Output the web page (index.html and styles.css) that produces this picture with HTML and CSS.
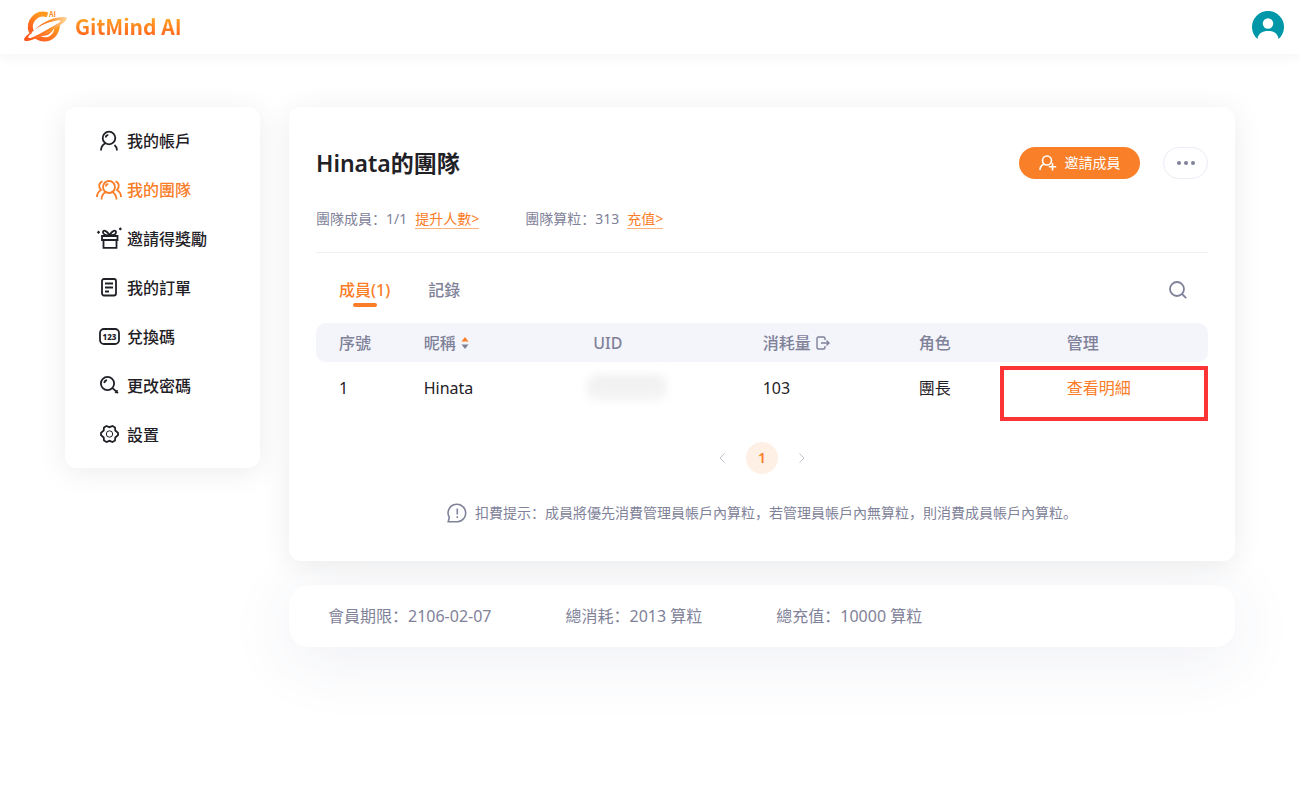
FILE: index.html
```html
<!DOCTYPE html>
<html lang="zh-CN">
<head>
<meta charset="utf-8">
<meta name="viewport" content="width=device-width, initial-scale=1">
<title>GitMind AI</title>
<link rel="stylesheet" href="styles.css">
</head>
<body>
<header class="topbar">
  <a class="brand" href="#">
    <svg class="brand-mark" viewBox="0 0 46 34" aria-hidden="true">
      <defs>
        <linearGradient id="g1" x1="0" y1="1" x2="0.6" y2="0">
          <stop offset="0" stop-color="#ff5a1f"/><stop offset="1" stop-color="#ff9a1f"/>
        </linearGradient>
        <linearGradient id="g2" x1="0" y1="0" x2="1" y2="0">
          <stop offset="0" stop-color="#ff4e1a"/><stop offset="0.6" stop-color="#ff8a24"/><stop offset="1" stop-color="#ffd9a0"/>
        </linearGradient>
      </defs>
      <path d="M24.500 4.800A12.800 12.800 0 0 0 8.500 22" fill="none" stroke="url(#g1)" stroke-width="5"/>
      <path d="M12 28.500C22 35.500 36.500 30 37 14.500L31.500 17.500C30.500 26 23.500 29.500 17.500 26Z" fill="url(#g1)"/>
      <path d="M8.500 21.500C3 25.500 0 29 1.500 30.600C3.500 32.600 14 28.500 24 23C36 16.500 45 10.500 43.800 8C42.500 6 34 7 27 9.700C20 12.500 15 16 11.500 20C19 14.500 27 11.500 34 10.500C38 10 38.500 11 36 12.800C31 16 26 18.500 19 22.500C12 26.500 6.500 28.800 5.500 27.800C4.800 27 6 25 9 23Z" fill="url(#g2)"/>
      <path d="M18 25.500C23 24 28 21 30.500 17.500C30 22 25 27 18 25.500Z" fill="url(#g1)"/>
      <text class="mark-text" x="26" y="7">AI</text>
    </svg>
    <span class="brand-name">GitMind AI</span>
  </a>
  <button class="avatar" aria-label="帳戶">
    <svg viewBox="0 0 32 32" aria-hidden="true">
      <path d="M5.500 28A16 16 0 1 1 26.500 28C26 22.500 21.500 20 16 20S6 22.500 5.500 28Z" fill="#0097a9"/>
      <circle cx="16" cy="12.500" r="5.200" fill="#fff"/>
    </svg>
  </button>
</header>

<div class="layout">
  <nav class="sidebar">
    <a class="nav-item" href="#">
      <svg class="nav-icon" viewBox="0 0 26 22"><circle cx="13" cy="8" r="6.300"/><path d="M5 20.500C5 16.800 6.800 14.600 9.300 13.200M18.500 15C20.200 16.400 21 18 21 20.500M9.700 7.500C9.900 6 11 5 12.300 4.800"/></svg>
      我的帳戶</a>
    <a class="nav-item active" href="#">
      <svg class="nav-icon" viewBox="0 0 26 22"><circle cx="13" cy="8" r="6"/><path d="M5.500 20.500C5.500 17 7 14.600 9.500 12.900M20.500 20.500C20.500 17 19 14.600 16.500 12.900M6.500 2.300C2.500 3.500 2.300 8.500 5 11C2.300 12.500 1 14.800 1 18M19.500 2.300C23.500 3.500 23.700 8.500 21 11C23.700 12.500 25 14.800 25 18M9.800 7.500C10 6 11 5 12.300 4.800"/></svg>
      我的團隊</a>
    <a class="nav-item" href="#">
      <svg class="nav-icon" viewBox="0 0 26 22"><path d="M6 8H21.500V12H6ZM7.500 12V19.800H20.500V12M13.500 7.500C11 2 6.500 1.500 7 4.500C7.200 6 10 7.300 13.500 7.500C17 7.300 20 6 20 4.500C20.500 1.500 16 2 13.500 7.500"/><path class="solid" d="M2.500 2.500L4.200 4.200L2.500 5.900L.8 4.200ZM24.300 -.8L26 .9L24.300 2.600L22.600 .9Z"/></svg>
      邀請得獎勵</a>
    <a class="nav-item" href="#">
      <svg class="nav-icon" viewBox="0 0 26 22"><rect x="6" y="2" width="14" height="16.500" rx="2"/><path d="M9 6.500H17M9 10.500H17M9 14.500H13"/></svg>
      我的訂單</a>
    <a class="nav-item" href="#">
      <svg class="nav-icon" viewBox="0 0 26 22"><rect x="4" y="3" width="19" height="15" rx="4"/><text class="icon-text" x="13.500" y="13.500">123</text></svg>
      兌換碼</a>
    <a class="nav-item" href="#">
      <svg class="nav-icon" viewBox="0 0 26 22"><circle cx="11.500" cy="8.500" r="6.600"/><path d="M16.500 13.200L22 18.200M19.300 18L21.500 15.300M8.200 8C8.500 6.300 9.600 5.400 11 5.200"/></svg>
      更改密碼</a>
    <a class="nav-item" href="#">
      <svg class="nav-icon" viewBox="0 0 26 22"><path d="M10.500 2L13.500 3.200L16.500 2L19 3.500L19.300 6.500L22 8.800V11.200L19.300 13.500L19 16.500L16.500 18L13.500 16.800L10.500 18L8 16.500L7.700 13.500L5 11.200V8.800L7.700 6.500L8 3.500Z"/><circle class="thin" cx="13.500" cy="10" r="3.200"/></svg>
      設置</a>
  </nav>

  <main class="content">
    <section class="card team">
      <div class="team-head">
        <h1 class="team-title">Hinata的團隊</h1>
        <button class="invite">
          <svg class="invite-icon" viewBox="0 0 18 16"><circle cx="8" cy="5.500" r="4.500"/><path d="M1 15C1 12 2.500 10.200 4.800 9.200M13.500 8V15.500M9.800 11.800H17.200"/></svg>
          邀請成員</button>
        <button class="more" aria-label="更多">
          <svg viewBox="0 0 18 4"><circle cx="2" cy="2" r="2"/><circle cx="9" cy="2" r="2"/><circle cx="16" cy="2" r="2"/></svg>
        </button>
      </div>
      <div class="team-stats">
        <span class="stat">團隊成員：1/1 <a class="stat-link" href="#">提升人數&gt;</a></span>
        <span class="stat">團隊算粒：313 <a class="stat-link" href="#">充值&gt;</a></span>
      </div>
      <div class="tabs">
        <button class="tab current">成員(1)</button>
        <button class="tab">記錄</button>
        <button class="search" aria-label="搜尋">
          <svg viewBox="0 0 18 18"><circle cx="8" cy="8" r="7"/><path d="M13 13L17.200 17.200"/></svg>
        </button>
      </div>
      <div class="table-wrap">
        <table class="members">
          <thead>
            <tr>
              <th class="c-no">序號</th>
              <th class="c-name"><span class="with-icon">昵稱<svg class="sort" viewBox="0 0 8 14"><path d="M4 1L7.500 5.500H.5Z" fill="#fa7d27"/><path d="M4 13L7.500 8.500H.5Z" fill="#7f8299"/></svg></span></th>
              <th class="c-uid">UID</th>
              <th class="c-use"><span class="with-icon">消耗量<svg class="export" viewBox="0 0 14 14"><path d="M9 4V2.500C9 1.500 8.500 1 7.500 1H2.500C1.500 1 1 1.500 1 2.500V11.500C1 12.500 1.500 13 2.500 13H7.500C8.500 13 9 12.500 9 11.500V10M5 7H13M10.500 4.500L13 7L10.500 9.500"/></svg></span></th>
              <th class="c-role">角色</th>
              <th>管理</th>
            </tr>
          </thead>
          <tbody>
            <tr>
              <td>1</td>
              <td>Hinata</td>
              <td><span class="masked"></span></td>
              <td>103</td>
              <td>團長</td>
              <td><a class="detail" href="#">查看明細</a></td>
            </tr>
          </tbody>
        </table>
        <div class="highlight"></div>
      </div>
      <div class="pager">
        <button class="page-arrow" aria-label="上一頁"><svg viewBox="0 0 6 10"><path d="M5.500 .5L1 5L5.500 9.500"/></svg></button>
        <button class="page">1</button>
        <button class="page-arrow" aria-label="下一頁"><svg viewBox="0 0 6 10"><path d="M.5 .5L5 5L.5 9.500"/></svg></button>
      </div>
      <p class="hint">
        <svg class="hint-icon" viewBox="0 0 20 20"><path d="M1.200 18.800L2.300 14.500A8.800 8.800 0 1 1 10.500 18.800Z"/><path d="M10.300 5.500V11.500M10.300 13.300V15"/></svg>
        扣費提示：成員將優先消費管理員帳戶內算粒，若管理員帳戶內無算粒，則消費成員帳戶內算粒。
      </p>
    </section>
    <section class="card summary">
      <span>會員期限：2106-02-07</span>
      <span>總消耗：2013 算粒</span>
      <span>總充值：10000 算粒</span>
    </section>
  </main>
</div>
</body>
</html>
```

FILE: styles.css
```css
* { box-sizing: border-box; }

body {
  margin: 0;
  min-height: 100vh;
  background: #fff;
  color: #1f2126;
  font: 16px/24px "Noto Sans", "Noto Sans CJK SC", sans-serif;
  overflow-x: hidden;
}

a { color: inherit; text-decoration: none; }
button { border: 0; padding: 0; background: none; font: inherit; color: inherit; cursor: pointer; }
svg { display: block; fill: none; }

.topbar {
  display: flex;
  align-items: center;
  justify-content: space-between;
  height: 54px;
  padding: 0 16px 0 23px;
  box-shadow: 0 2px 12px rgba(80, 80, 120, 0.07);
}
.brand { display: flex; align-items: center; gap: 6px; }
.brand-mark { width: 46px; height: 34px; overflow: visible; }
.mark-text { font: 700 7px "Noto Sans CJK SC", sans-serif; fill: #ff8a24; }
.brand-name {
  padding-bottom: 2px;
  font: 700 21px/30px "Noto Sans CJK SC", sans-serif;
  background: linear-gradient(#ffa021 25%, #ff6420 80%);
  background-clip: text;
  -webkit-background-clip: text;
  color: transparent;
}
.avatar svg { width: 32px; height: 32px; }

.layout {
  display: flex;
  align-items: flex-start;
  gap: 29px;
  width: 90%;
  margin: 53px auto 0;
}

.sidebar {
  flex: 0 0 195px;
  padding: 9px 0;
  border-radius: 12px;
  background: #fff;
  box-shadow: 0 4px 30px rgba(0, 0, 0, 0.08);
}
.nav-item {
  display: flex;
  align-items: center;
  gap: 5px;
  height: 49px;
  padding-left: 31px;
  font-size: 16px;
  font-weight: 500;
}
.nav-item.active { color: #fa7d27; }
.nav-icon { width: 26px; height: 22px; stroke: currentColor; stroke-width: 1.8; overflow: visible; }
.nav-icon .solid { fill: currentColor; stroke: none; }
.nav-icon .thin { stroke-width: 1; }
.icon-text { font: 800 8px "Noto Sans", sans-serif; fill: currentColor; stroke: none; text-anchor: middle; }

.content { flex: 1; min-width: 0; display: flex; flex-direction: column; gap: 24px; }
.card { border-radius: 12px; background: #fff; }

.team { position: relative; padding: 40px 27px 36px; box-shadow: 0 4px 30px rgba(0, 0, 0, 0.08); }
.team-head { display: flex; align-items: center; height: 32px; }
.team-title { flex: 1; margin: 0; font-size: 23px; line-height: 32px; font-weight: 600; }
.invite {
  display: flex;
  align-items: center;
  justify-content: center;
  gap: 8px;
  width: 121px;
  height: 32px;
  border-radius: 16px;
  background: #f98029;
  color: #fff;
  font-size: 14px;
}
.invite-icon { width: 18px; height: 16px; stroke: #fff; stroke-width: 1.6; }
.more {
  display: grid;
  place-items: center;
  width: 45px;
  height: 32px;
  margin-left: 23px;
  border: 1px solid #ececf5;
  border-radius: 16px;
}
.more svg { width: 18px; height: 4px; fill: #7f8299; }

.team-stats {
  display: flex;
  gap: 46px;
  padding: 28px 0 21px;
  border-bottom: 1px solid #efeff2;
  color: #7f8299;
  font-size: 14px;
}
.stat { display: flex; gap: 8px; }
.stat-link { height: 22px; border-bottom: 1px solid #fbb27d; color: #fa7d27; }

.tabs { display: flex; align-items: center; gap: 38px; height: 70px; padding: 0 21px 0 23px; color: #7f8299; }
.tab { position: relative; height: 32px; margin-top: 6px; padding-bottom: 2px; font-weight: 500; }
.tab.current { color: #fa7d27; }
.tab.current::after {
  content: "";
  position: absolute;
  left: 50%;
  bottom: 0;
  width: 24px;
  height: 4px;
  margin-left: -12px;
  border-radius: 2px;
  background: #fa7d27;
}
.search { margin-left: auto; margin-top: 4px; }
.search svg { width: 18px; height: 18px; stroke: #7f8299; stroke-width: 1.8; }

.table-wrap { position: relative; }
.members { width: 100%; table-layout: fixed; border-spacing: 0; }
.members th { height: 39px; padding: 0 0 0 23px; background: #f4f4fb; color: #7f8299; font-weight: 500; text-align: left; }
.members th:first-child { border-radius: 10px 0 0 10px; }
.members th:last-child { border-radius: 0 10px 10px 0; }
.members td { height: 52px; padding: 0 0 0 23px; }
.c-no { width: 9.5%; }
.c-name, .c-uid { width: 19%; }
.c-use { width: 17.5%; }
.c-role { width: 16.6%; }
.with-icon { display: flex; align-items: center; gap: 5px; }
.sort { width: 8px; height: 14px; }
.export { width: 14px; height: 14px; stroke: #7f8299; stroke-width: 1.4; }
.masked { display: block; width: 80px; height: 26px; margin-left: -6px; border-radius: 10px; background: linear-gradient(#efefef, #f6f6f6); filter: blur(4px); }
.detail { color: #fa7d27; }
.highlight {
  position: absolute;
  right: 0;
  bottom: -7px;
  width: 208px;
  height: 55px;
  border: 4px solid #fb3535;
  pointer-events: none;
}

.pager { display: flex; align-items: center; justify-content: center; gap: 21px; margin-top: 28px; }
.page { width: 32px; height: 32px; border-radius: 50%; background: #fff0e6; color: #fa7d27; font-size: 14px; font-weight: 600; }
.page-arrow svg { width: 6px; height: 10px; stroke: #c0c1cb; }

.hint {
  display: flex;
  align-items: center;
  justify-content: center;
  gap: 8px;
  margin: 27px 0 0;
  color: #7f8299;
  font-size: 14px;
}
.hint-icon { flex: none; width: 20px; height: 20px; stroke: #7f8299; stroke-width: 1.6; }

.summary {
  display: flex;
  gap: 74px;
  padding: 19px 39px;
  border-radius: 20px;
  color: #7f8299;
  box-shadow: 0 12px 68px rgba(60, 70, 130, 0.09);
}
```
